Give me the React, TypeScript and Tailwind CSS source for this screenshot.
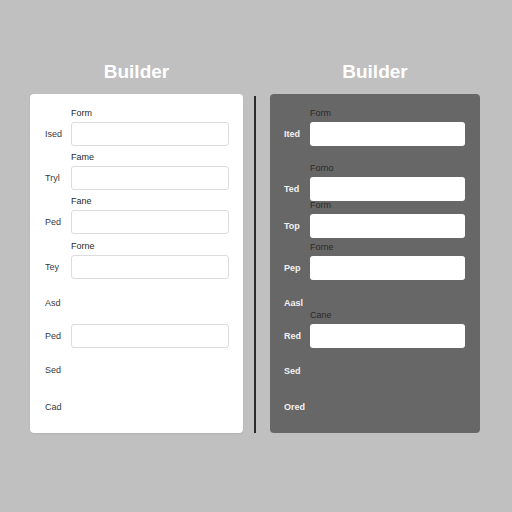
type Field = {
  label: string
  caption?: string
  input?: boolean
  mt: string
}

// Left form: light card with bordered inputs
const lightFields: Field[] = [
  { label: 'Ised', caption: 'Form', input: true, mt: 'mt-0' },
  { label: 'Tryl', caption: 'Fame', input: true, mt: 'mt-[5px]' },
  { label: 'Ped', caption: 'Fane', input: true, mt: 'mt-[5px]' },
  { label: 'Tey', caption: 'Forne', input: true, mt: 'mt-[6px]' },
  { label: 'Asd', mt: 'mt-[16px]' },
  { label: 'Ped', input: true, mt: 'mt-[13px]' },
  { label: 'Sed', mt: 'mt-[14px]' },
  { label: 'Cad', mt: 'mt-[21px]' },
]

// Right form: dark card with plain white inputs
const darkFields: Field[] = [
  { label: 'Ited', caption: 'Form', input: true, mt: 'mt-0' },
  { label: 'Ted', caption: 'Forno', input: true, mt: 'mt-[16px]' },
  { label: 'Top', caption: 'Form', input: true, mt: '-mt-[2px]' },
  { label: 'Pep', caption: 'Forne', input: true, mt: 'mt-[3px]' },
  { label: 'Aasl', mt: 'mt-[15px]' },
  { label: 'Red', caption: 'Cane', input: true, mt: '-mt-[2px]' },
  { label: 'Sed', mt: 'mt-[15px]' },
  { label: 'Ored', mt: 'mt-[20px]' },
]

function FieldRow({ field, dark }: { field: Field; dark: boolean }) {
  return (
    <div className={field.mt}>
      {field.caption && (
        <div
          className={`h-[15px] text-[9px] leading-[12px] text-[#2a2a2a] ${
            dark ? 'pl-[26px]' : 'pl-[26px]'
          }`}
        >
          {field.caption}
        </div>
      )}
      <div className={`flex items-center ${field.input ? 'h-[24px]' : 'h-[16px]'}`}>
        <span
          className={`w-[26px] shrink-0 text-[9px] leading-none ${
            dark ? 'font-bold text-[#f2f2f2]' : 'font-medium text-[#3a3a3a]'
          }`}
        >
          {field.label}
        </span>
        {field.input && (
          <div
            className={`h-full flex-1 rounded-[3px] bg-white ${
              dark ? '' : 'border border-[#dcdcdc]'
            }`}
          />
        )}
      </div>
    </div>
  )
}

function Panel({ fields, dark }: { fields: Field[]; dark: boolean }) {
  return (
    <div className={dark ? 'w-[210px]' : 'w-[213px]'}>
      <h2 className="h-[22px] pt-0 text-center text-[19px] font-bold leading-[22px] text-white">
        Builder
      </h2>
      <div
        className={`mt-[11px] h-[339px] rounded-[4px] pt-[13px] ${
          dark
            ? 'bg-[#676767] pl-[14px] pr-[15px]'
            : 'bg-white pl-[15px] pr-[14px] shadow-[0_1px_2px_rgba(0,0,0,0.08)]'
        }`}
      >
        {fields.map((f, i) => (
          <FieldRow key={i} field={f} dark={dark} />
        ))}
      </div>
    </div>
  )
}

export default function App() {
  return (
    <div
      className="flex h-[512px] w-[512px] bg-[#c0c0c0] pl-[30px] pt-[61px]"
      style={{ fontFamily: '"Liberation Sans", Arial, sans-serif' }}
    >
      <Panel fields={lightFields} dark={false} />
      <div className="ml-[11px] mt-[35px] h-[337px] w-[2px] bg-[#2b2b2b]" />
      <div className="ml-[14px]">
        <Panel fields={darkFields} dark={true} />
      </div>
    </div>
  )
}
